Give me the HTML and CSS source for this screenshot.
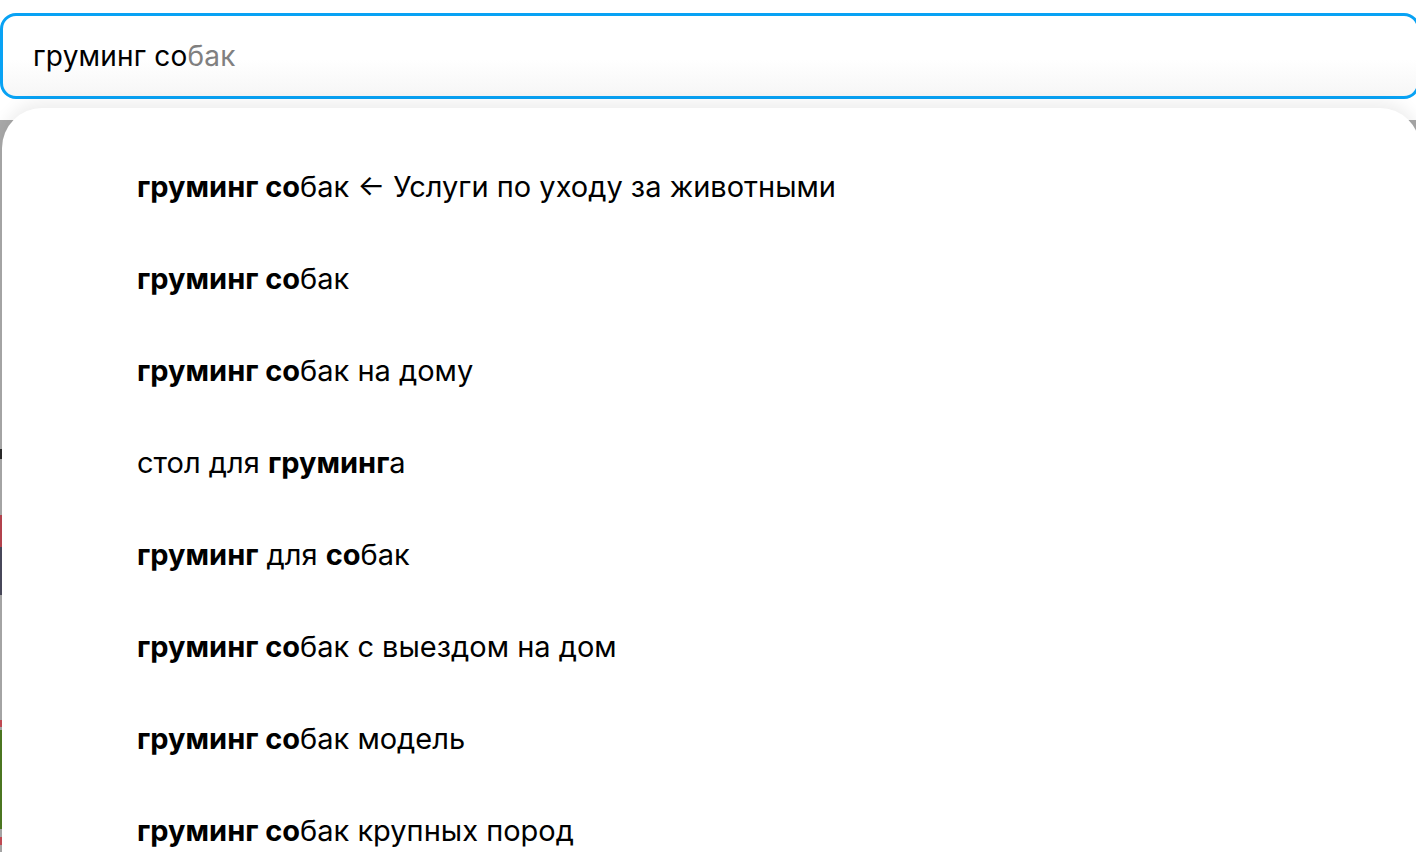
FILE: index.html
```html
<!DOCTYPE html>
<html lang="ru">
<head>
    <meta charset="UTF-8">
    <meta name="viewport" content="width=device-width, initial-scale=1.0">
    <title>Поиск</title>
    <link rel="stylesheet" href="styles.css">
</head>

<body>
    <div class="search-bar">
        <div class="search-input">
            <span class="typed">груминг со</span><span class="hint">бак</span>
        </div>
    </div>

    <div class="backdrop">
        <div class="page-edge">
            <span class="edge-mark dark"></span>
            <span class="edge-mark red"></span>
            <span class="edge-mark navy"></span>
            <span class="edge-mark red2"></span>
            <span class="edge-mark green"></span>
            <span class="edge-mark red3"></span>
        </div>

        <ul class="suggest-list">
            <li><b>груминг со</b>бак ← Услуги по уходу за животными</li>
            <li><b>груминг со</b>бак</li>
            <li><b>груминг со</b>бак на дому</li>
            <li>стол для <b>груминг</b>а</li>
            <li><b>груминг</b> для <b>со</b>бак</li>
            <li><b>груминг со</b>бак с выездом на дом</li>
            <li><b>груминг со</b>бак модель</li>
            <li><b>груминг со</b>бак крупных пород</li>
        </ul>
    </div>
</body>
</html>
```

FILE: styles.css
```css
body {
    margin: 0;
    background-color: white;
    font-family: Inter, "Noto Sans", Arial, sans-serif;
    color: black;
    overflow: hidden;
    height: 100vh;
    display: flex;
    flex-direction: column;
}

.search-bar {
    padding-top: 13px;
    margin-right: -4px;
}

.search-input {
    height: 80px;
    border: 3px solid #08a2f4;
    border-radius: 16px;
    background: linear-gradient(to bottom, #ffffff 55%, #f6f6f6);
    display: flex;
    align-items: center;
    padding-left: 30px;
    font-size: 28px;
    letter-spacing: 0.2px;
}

.hint {
    color: #808080;
}

.backdrop {
    flex: 1;
    display: flex;
    margin-top: 21px;
    background-color: #a9a9a9;
}

.page-edge {
    width: 2px;
    flex-shrink: 0;
    display: flex;
    flex-direction: column;
}

.edge-mark {
    display: block;
}

.edge-mark.dark {
    margin-top: 329px;
    height: 10px;
    background-color: #2a2a2a;
}

.edge-mark.red {
    margin-top: 56px;
    height: 32px;
    background-color: #b8444f;
}

.edge-mark.navy {
    height: 48px;
    background-color: #4a4a5c;
}

.edge-mark.red2 {
    margin-top: 125px;
    height: 7px;
    background-color: #c54c55;
}

.edge-mark.green {
    margin-top: 3px;
    height: 99px;
    background-color: #4e7a22;
}

.edge-mark.red3 {
    margin-top: 8px;
    height: 8px;
    background-color: #c54c55;
}

.suggest-list {
    flex: 1;
    list-style: none;
    margin: -12px -4px 0 0;
    padding: 32px 0 0 135px;
    background-color: white;
    border-radius: 40px 40px 0 0;
    box-shadow: 0 -6px 16px rgba(0, 0, 0, 0.07);
}

.suggest-list li {
    height: 92px;
    display: flex;
    align-items: center;
    white-space: pre;
    font-size: 29px;
}

.suggest-list b {
    font-weight: 700;
}
```
